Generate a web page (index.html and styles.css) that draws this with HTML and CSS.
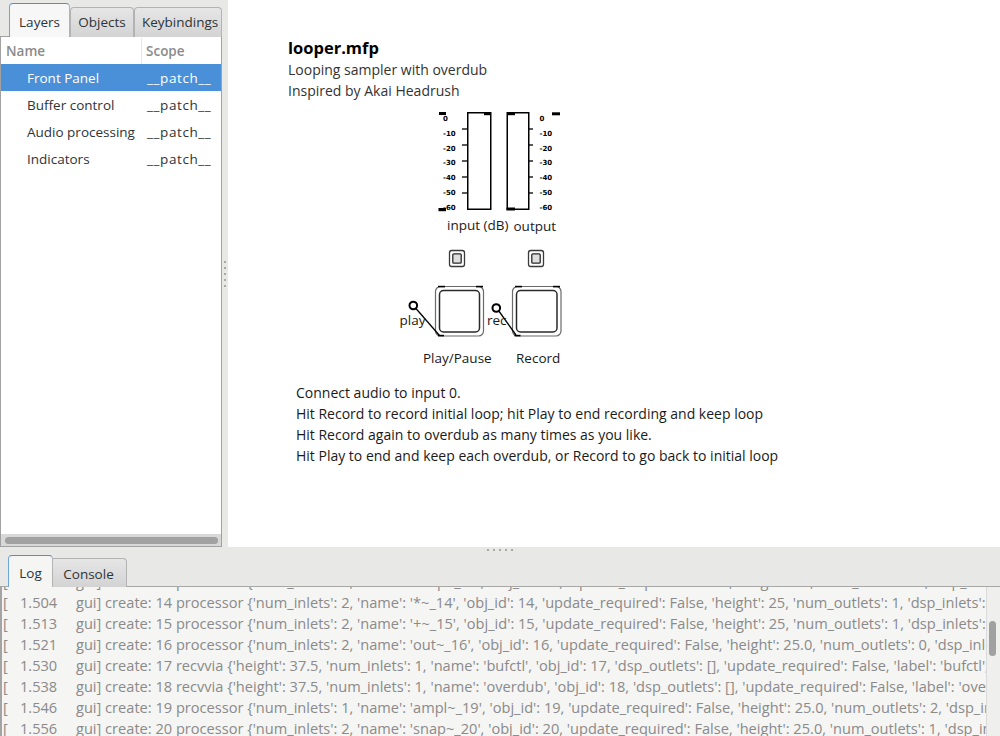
FILE: index.html
```html
<!DOCTYPE html>
<html>
<head>
<meta charset="utf-8">
<link rel="stylesheet" href="styles.css">
</head>
<body>
<div class="top">
  <div class="left">
    <div class="tabs">
      <div class="tab active t-layers">Layers</div>
      <div class="tab t-objects">Objects</div>
      <div class="tab t-keys">Keybindings</div>
    </div>
    <div class="panel">
      <div class="thead">
        <div class="c-name">Name</div>
        <div class="c-scope">Scope</div>
      </div>
      <div class="row sel"><div class="c-name">Front Panel</div><div class="c-scope">__patch__</div></div>
      <div class="row"><div class="c-name">Buffer control</div><div class="c-scope">__patch__</div></div>
      <div class="row"><div class="c-name">Audio processing</div><div class="c-scope">__patch__</div></div>
      <div class="row"><div class="c-name">Indicators</div><div class="c-scope">__patch__</div></div>
      <div class="spacer"></div>
      <div class="hscroll"><div class="hthumb"></div></div>
    </div>
  </div>
  <div class="vsep">
    <div class="vdots"><i></i><i></i><i></i><i></i><i></i></div>
  </div>
  <div class="canvas">
    <div class="node head">
      <div class="title">looper.mfp</div>
      <div class="desc">Looping sampler with overdub</div>
      <div class="desc">Inspired by Akai Headrush</div>
    </div>
    <svg class="draw" width="772" height="547" viewBox="228 0 772 547" xmlns="http://www.w3.org/2000/svg">
      <!-- input meter -->
      <g class="scale">
        <text x="443" y="120.5">0</text>
        <text x="443" y="135.5">-10</text>
        <text x="443" y="150.5">-20</text>
        <text x="443" y="164.5">-30</text>
        <text x="443" y="179.5">-40</text>
        <text x="443" y="195">-50</text>
        <text x="443" y="209.5">-60</text>
      </g>
      <g stroke="#000" stroke-width="1.3">
        <line x1="462" y1="129" x2="467" y2="129"/>
        <line x1="462" y1="145" x2="467" y2="145"/>
        <line x1="462" y1="161" x2="467" y2="161"/>
        <line x1="462" y1="177" x2="467" y2="177"/>
        <line x1="462" y1="193" x2="467" y2="193"/>
      </g>
      <rect x="467.75" y="112.75" width="23" height="96.5" fill="#fff" stroke="#000" stroke-width="1.5"/>
      <rect x="484" y="112" width="7" height="3.2" fill="#000"/>
      <rect x="439" y="112" width="7" height="3" fill="#000"/>
      <rect x="438.5" y="208" width="7.5" height="3.2" fill="#000"/>

      <!-- output meter -->
      <g class="scale">
        <text x="539.5" y="120.5">0</text>
        <text x="539.5" y="135.5">-10</text>
        <text x="539.5" y="150.5">-20</text>
        <text x="539.5" y="164.5">-30</text>
        <text x="539.5" y="179.5">-40</text>
        <text x="539.5" y="195">-50</text>
        <text x="539.5" y="209.5">-60</text>
      </g>
      <g stroke="#000" stroke-width="1.3">
        <line x1="528.5" y1="129" x2="533" y2="129"/>
        <line x1="528.5" y1="145" x2="533" y2="145"/>
        <line x1="528.5" y1="161" x2="533" y2="161"/>
        <line x1="528.5" y1="177" x2="533" y2="177"/>
        <line x1="528.5" y1="193" x2="533" y2="193"/>
      </g>
      <rect x="507.25" y="112.75" width="21.5" height="96.5" fill="#fff" stroke="#000" stroke-width="1.5"/>
      <rect x="507" y="112" width="8" height="3.2" fill="#000"/>
      <rect x="506.5" y="207.5" width="8.5" height="3" fill="#000"/>
      <rect x="552" y="112.3" width="8" height="3" fill="#000"/>

      <text class="lbl" x="447" y="230">input (dB)</text>
      <text class="lbl" x="513.5" y="230.5">output</text>

      <!-- toggles -->
      <rect x="449.5" y="250.5" width="15" height="16" rx="2.2" fill="#fff" stroke="#3a3a3a" stroke-width="1.3"/>
      <rect x="452.8" y="253.8" width="8.4" height="9.4" rx="1" fill="#dedede" stroke="#2a2a2a" stroke-width="1.3"/>
      <rect x="528.5" y="250.5" width="15" height="16" rx="2.2" fill="#fff" stroke="#3a3a3a" stroke-width="1.3"/>
      <rect x="531.8" y="253.8" width="8.4" height="9.4" rx="1" fill="#dedede" stroke="#2a2a2a" stroke-width="1.3"/>

      <!-- play button -->
      <rect x="435.5" y="286.5" width="48" height="49.5" rx="5" fill="#fff" stroke="#6a6a6a" stroke-width="1.2"/>
      <rect x="439.5" y="290.5" width="40" height="41.5" rx="4" fill="#fff" stroke="#2a2a2a" stroke-width="1.5"/>
      <rect x="438" y="285.8" width="7" height="1.6" fill="#000"/>
      <rect x="476" y="285.8" width="7" height="1.6" fill="#000"/>
      <rect x="438" y="334.8" width="6" height="1.6" fill="#000"/>
      <line x1="415.5" y1="308" x2="439.5" y2="335.5" stroke="#000" stroke-width="1.3"/>
      <circle cx="413.3" cy="305.5" r="3.8" fill="#fff" stroke="#000" stroke-width="2"/>
      <text class="lbl" x="399.5" y="324.5">play</text>
      <text class="lbl" x="423" y="362.5">Play/Pause</text>

      <!-- record button -->
      <rect x="512.5" y="286.5" width="48.5" height="49.5" rx="5" fill="#fff" stroke="#6a6a6a" stroke-width="1.2"/>
      <rect x="516.5" y="290.5" width="40.5" height="41.5" rx="4" fill="#fff" stroke="#2a2a2a" stroke-width="1.5"/>
      <rect x="515" y="285.8" width="7" height="1.6" fill="#000"/>
      <rect x="553" y="285.8" width="7" height="1.6" fill="#000"/>
      <rect x="514.5" y="334.8" width="6" height="1.6" fill="#000"/>
      <line x1="498.5" y1="310.5" x2="516" y2="335" stroke="#000" stroke-width="1.3"/>
      <circle cx="496.3" cy="308" r="3.8" fill="#fff" stroke="#000" stroke-width="2"/>
      <text class="lbl" x="487" y="324.5">rec</text>
      <text class="lbl" x="516" y="362.5">Record</text>
    </svg>
    <div class="node help">
      <div>Connect audio to input 0.</div>
      <div>Hit Record to record initial loop; hit Play to end recording and keep loop</div>
      <div>Hit Record again to overdub as many times as you like.</div>
      <div>Hit Play to end and keep each overdub, or Record to go back to initial loop</div>
    </div>
  </div>
</div>
<div class="bottom">
  <div class="hsep"><div class="hdots"><i></i><i></i><i></i><i></i><i></i></div></div>
  <div class="logtabs">
    <div class="btab active t-log">Log</div>
    <div class="btab t-console">Console</div>
  </div>
  <div class="logbox">
    <div class="lines">
      <div class="ln cut"><div class="inner"><span class="lb">[</span><span class="ts">1.496</span>gui] create: 13 processor {'num_inlets': 2, 'name': 'snap~_13', 'obj_id': 13, 'update_required': False, 'height': 25, 'num_outlets': 1, 'dsp_inlets': [0</div></div>
      <div class="ln"><span class="lb">[</span><span class="ts">1.504</span>gui] create: 14 processor {'num_inlets': 2, 'name': '*~_14', 'obj_id': 14, 'update_required': False, 'height': 25, 'num_outlets': 1, 'dsp_inlets': [0, 1]</div>
      <div class="ln"><span class="lb">[</span><span class="ts">1.513</span>gui] create: 15 processor {'num_inlets': 2, 'name': '+~_15', 'obj_id': 15, 'update_required': False, 'height': 25, 'num_outlets': 1, 'dsp_inlets': [0, 1]</div>
      <div class="ln"><span class="lb">[</span><span class="ts">1.521</span>gui] create: 16 processor {'num_inlets': 2, 'name': 'out~_16', 'obj_id': 16, 'update_required': False, 'height': 25.0, 'num_outlets': 0, 'dsp_inlets': [0]</div>
      <div class="ln"><span class="lb">[</span><span class="ts">1.530</span>gui] create: 17 recvvia {'height': 37.5, 'num_inlets': 1, 'name': 'bufctl', 'obj_id': 17, 'dsp_outlets': [], 'update_required': False, 'label': 'bufctl', 'x': 0</div>
      <div class="ln"><span class="lb">[</span><span class="ts">1.538</span>gui] create: 18 recvvia {'height': 37.5, 'num_inlets': 1, 'name': 'overdub', 'obj_id': 18, 'dsp_outlets': [], 'update_required': False, 'label': 'overdub', 'x': 0</div>
      <div class="ln"><span class="lb">[</span><span class="ts">1.546</span>gui] create: 19 processor {'num_inlets': 1, 'name': 'ampl~_19', 'obj_id': 19, 'update_required': False, 'height': 25.0, 'num_outlets': 2, 'dsp_inlets': [0]</div>
      <div class="ln"><span class="lb">[</span><span class="ts">1.556</span>gui] create: 20 processor {'num_inlets': 2, 'name': 'snap~_20', 'obj_id': 20, 'update_required': False, 'height': 25.0, 'num_outlets': 1, 'dsp_inlets': [0]</div>
    </div>
    <div class="vscroll"><div class="vthumb"></div></div>
  </div>
</div>
</body>
</html>
```

FILE: styles.css
```css
* { box-sizing: border-box; }
html, body {
  margin: 0;
  padding: 0;
}
body {
  width: 1000px;
  height: 736px;
  overflow: hidden;
  background: #e8e8e7;
  font-family: "Open Sans", "DejaVu Sans", sans-serif;
  font-size: 13.5px;
  color: #2e3436;
}

.top {
  display: flex;
  height: 547px;
}

.left {
  width: 222px;
  display: flex;
  flex-direction: column;
}

.tabs {
  height: 37px;
  display: flex;
  align-items: flex-end;
  padding-left: 9px;
  position: relative;
  z-index: 1;
  margin-bottom: -1px;
}
.tab {
  height: 30px;
  border: 1px solid #b3b3b3;
  border-bottom: none;
  border-radius: 4px 4px 0 0;
  background: linear-gradient(#e6e6e6, #d3d3d3);
  display: flex;
  align-items: center;
  justify-content: center;
  padding-bottom: 1px;
  color: #2e3436;
  white-space: nowrap;
  overflow: hidden;
}
.tab.active {
  height: 34px;
  background: #f7f7f7;
  border-color: #4a90d9 #b3b3b3 #b3b3b3 #6ea3dd;
  padding-top: 3px;
}
.t-layers { width: 61px; }
.t-objects { width: 64px; }
.t-keys { width: 88px; justify-content: flex-start; padding-left: 7px; }

.panel {
  flex: 1;
  border: 1px solid #a1a1a1;
  background: #fff;
  display: flex;
  flex-direction: column;
}
.thead, .row {
  display: flex;
  height: 27px;
  align-items: center;
}
.thead {
  color: #8b8b8b;
  font-weight: 600;
  padding-top: 1px;
}
.thead .c-name { padding-left: 5px; }
.thead .c-scope {
  border-left: 1px solid #e6e6e6;
  height: 100%;
  display: flex;
  align-items: center;
  padding-left: 4px;
}
.c-name {
  width: 140px;
  white-space: nowrap;
}
.c-scope {
  flex: 1;
  white-space: nowrap;
  overflow: hidden;
}
.row { padding-top: 1px; }
.row .c-name { padding-left: 26px; }
.row .c-scope { padding-left: 6px; letter-spacing: 0.6px; }
.row.sel {
  background: #4a90d9;
  color: #fff;
}
.spacer { flex: 1; }
.hscroll {
  height: 12px;
  background: #d8d8d8;
  padding: 3px 3px 2px 4px;
}
.hthumb {
  height: 7px;
  border-radius: 4px;
  background: #a1a1a1;
}

.vsep {
  width: 6px;
  display: flex;
  align-items: center;
  justify-content: center;
}
.vdots {
  display: flex;
  flex-direction: column;
  gap: 4px;
}
.vdots i, .hdots i {
  display: block;
  width: 2px;
  height: 2px;
  background: #a9a9a4;
}

.canvas {
  flex: 1;
  background: #fff;
  position: relative;
}
.draw {
  position: absolute;
  left: 0;
  top: 0;
}
.node {
  position: absolute;
  white-space: nowrap;
  color: #1a1a1a;
}
.head {
  left: 60px;
  top: 37px;
}
.title {
  font-weight: 700;
  font-size: 16.5px;
  line-height: 22px;
  color: #000;
}
.desc {
  font-size: 14px;
  line-height: 21px;
  color: #333;
}
.help {
  left: 68px;
  top: 382px;
  line-height: 21px;
  font-size: 14px;
}
.scale text {
  font-family: "DejaVu Sans", sans-serif;
  font-size: 7px;
  font-weight: 700;
  fill: #000;
}
.lbl {
  font-family: "Open Sans", "DejaVu Sans", sans-serif;
  font-size: 13.5px;
  fill: #1a1a1a;
}

.bottom {
  height: 189px;
  display: flex;
  flex-direction: column;
}
.hsep {
  height: 9px;
  display: flex;
  justify-content: center;
  padding-top: 2px;
}
.hdots {
  display: flex;
  gap: 4px;
}
.logtabs {
  height: 31px;
  display: flex;
  align-items: flex-end;
  padding-left: 8px;
  position: relative;
  z-index: 1;
  margin-bottom: -1px;
}
.btab {
  height: 29px;
  border: 1px solid #b3b3b3;
  border-bottom: none;
  border-radius: 4px 4px 0 0;
  background: linear-gradient(#e6e6e6, #d3d3d3);
  display: flex;
  align-items: center;
  justify-content: center;
  padding-top: 1px;
}
.btab.active {
  height: 32px;
  background: #f5f5f4;
  border-color: #4a90d9 #b3b3b3 #b3b3b3 #6ea3dd;
  position: relative;
  z-index: 2;
  padding-top: 3px;
}
.t-log { width: 45px; }
.t-console { width: 77px; margin-left: -3px; }

.logbox {
  flex: 1;
  min-height: 0;
  display: flex;
  border-top: 1px solid #a8a8a8;
  border-left: 2px solid #a4a4a4;
  background: #f5f5f4;
  overflow: hidden;
}
.lines {
  flex: 1;
  min-width: 0;
  overflow: hidden;
  color: #8a8a8a;
  font-size: 14.6px;
}
.ln {
  height: 21px;
  line-height: 21px;
  white-space: pre;
  padding-left: 1px;
}
.ln.cut {
  height: 5px;
  overflow: hidden;
  position: relative;
}
.ln.cut .inner {
  position: absolute;
  left: 1px;
  bottom: 0;
  height: 21px;
}
.lb {
  display: inline-block;
  width: 17px;
}
.ts {
  display: inline-block;
  width: 56px;
}
.vscroll {
  width: 14px;
  border-left: 1px solid #dadada;
  background: #efefee;
  padding: 34px 0 0 2px;
}
.vthumb {
  width: 7px;
  height: 35px;
  border-radius: 4px;
  background: #a1a1a1;
}
```
